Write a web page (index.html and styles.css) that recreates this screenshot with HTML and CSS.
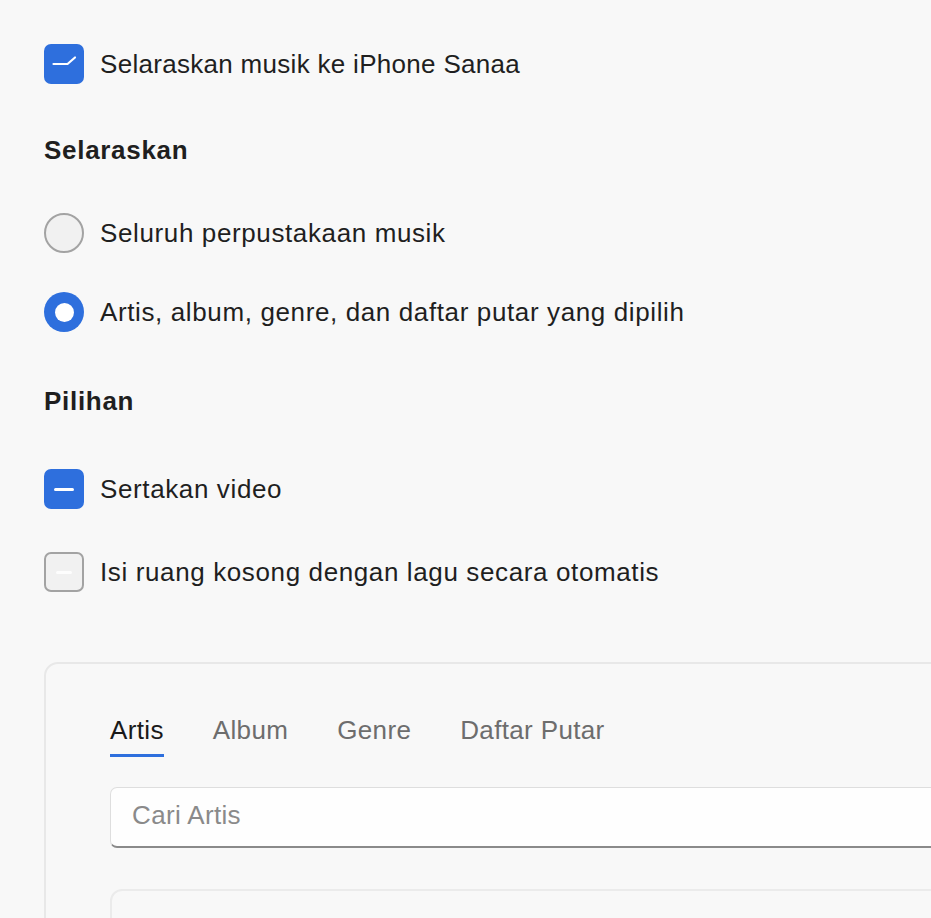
FILE: index.html
```html
<!DOCTYPE html>
<html lang="id">
<head>
<meta charset="utf-8">
<title>Sinkronisasi Musik</title>
<link rel="stylesheet" href="styles.css">
</head>
<body>
<main class="page">
  <label class="row row-first">
    <span class="check checked">
      <svg viewBox="0 0 40 40" width="40" height="40"><path d="M9.5 20 H23.5 L31 13.5" fill="none" stroke="#fff" stroke-width="2.2" stroke-linecap="round" stroke-linejoin="round"/></svg>
    </span>
    <span class="label tight">Selaraskan musik ke iPhone Sanaa</span>
  </label>

  <h2 class="heading h-sync">Selaraskan</h2>

  <label class="row r-all">
    <span class="radio"></span>
    <span class="label">Seluruh perpustakaan musik</span>
  </label>
  <label class="row r-sel">
    <span class="radio selected"><span class="dot"></span></span>
    <span class="label">Artis, album, genre, dan daftar putar yang dipilih</span>
  </label>

  <h2 class="heading h-opt">Pilihan</h2>

  <label class="row c-video">
    <span class="check checked"><span class="dash"></span></span>
    <span class="label">Sertakan video</span>
  </label>
  <label class="row c-fill">
    <span class="check"><span class="dash faint"></span></span>
    <span class="label">Isi ruang kosong dengan lagu secara otomatis</span>
  </label>

  <section class="panel">
    <nav class="tabs">
      <span class="tab active">Artis</span>
      <span class="tab">Album</span>
      <span class="tab">Genre</span>
      <span class="tab">Daftar Putar</span>
    </nav>
    <div class="search"><span class="placeholder">Cari Artis</span></div>
    <div class="list"></div>
  </section>
</main>
</body>
</html>
```
FILE: styles.css
```css
html, body {
  margin: 0;
  padding: 0;
  background: #f8f8f8;
  overflow: hidden;
}
body {
  font-family: "Liberation Sans", Arial, sans-serif;
  color: #1f1f1f;
  width: 931px;
  height: 918px;
}
.page {
  padding: 44px 0 0 44px;
  height: 874px;
  overflow: hidden;
}
.row {
  display: flex;
  align-items: center;
  gap: 16px;
  height: 40px;
}
.label {
  font-size: 26px;
  line-height: 32px;
  letter-spacing: 0.62px;
  white-space: nowrap;
}
.label.tight {
  letter-spacing: 0.3px;
}
.heading {
  margin: 0;
  font-size: 26px;
  line-height: 32px;
  font-weight: bold;
  letter-spacing: 0.7px;
  color: #1f1f1f;
}
.h-sync { margin-top: 50px; }
.r-all { margin-top: 47px; }
.r-sel { margin-top: 39px; }
.h-opt { margin-top: 53px; }
.c-video { margin-top: 52px; }
.c-fill { margin-top: 43px; }

.check {
  width: 40px;
  height: 40px;
  box-sizing: border-box;
  border-radius: 7px;
  border: 2px solid #a3a3a3;
  background: #f1f1f1;
  display: flex;
  align-items: center;
  justify-content: center;
  flex: none;
}
.check.checked {
  background: #2e6fdd;
  border: none;
}
.check svg { display: block; }
.dash {
  width: 20px;
  height: 3px;
  border-radius: 2px;
  background: #fff;
}
.dash.faint {
  width: 16px;
  background: #fdfdfd;
}
.radio {
  width: 40px;
  height: 40px;
  box-sizing: border-box;
  border-radius: 50%;
  border: 2px solid #a3a3a3;
  background: #f1f1f1;
  display: flex;
  align-items: center;
  justify-content: center;
  flex: none;
}
.radio.selected {
  border: none;
  background: #2e6fdd;
}
.radio .dot {
  width: 19px;
  height: 19px;
  border-radius: 50%;
  background: #fff;
}

.panel {
  margin-top: 70px;
  width: 1000px;
  height: 400px;
  box-sizing: border-box;
  border: 2px solid #e8e8e8;
  border-radius: 14px;
  padding: 50px 0 0 64px;
}
.tabs {
  display: flex;
  gap: 49px;
}
.tab {
  font-size: 26px;
  line-height: 32px;
  letter-spacing: 0.35px;
  color: #6d6d6d;
  padding-bottom: 8px;
  border-bottom: 3px solid transparent;
  white-space: nowrap;
}
.tab.active {
  color: #1a1a1a;
  border-bottom-color: #2e6fdd;
}
.search {
  margin-top: 30px;
  height: 61px;
  box-sizing: border-box;
  background: #fefefe;
  border: 1px solid #dedede;
  border-bottom: 2px solid #8a8a8a;
  border-radius: 7px;
  display: flex;
  align-items: center;
  padding-left: 21px;
  padding-bottom: 3px;
}
.placeholder {
  font-size: 26px;
  letter-spacing: 0.35px;
  color: #8a8a8a;
}
.list {
  margin-top: 41px;
  height: 200px;
  border: 2px solid #ebebeb;
  border-radius: 12px;
  background: #f8f8f8;
}
```
